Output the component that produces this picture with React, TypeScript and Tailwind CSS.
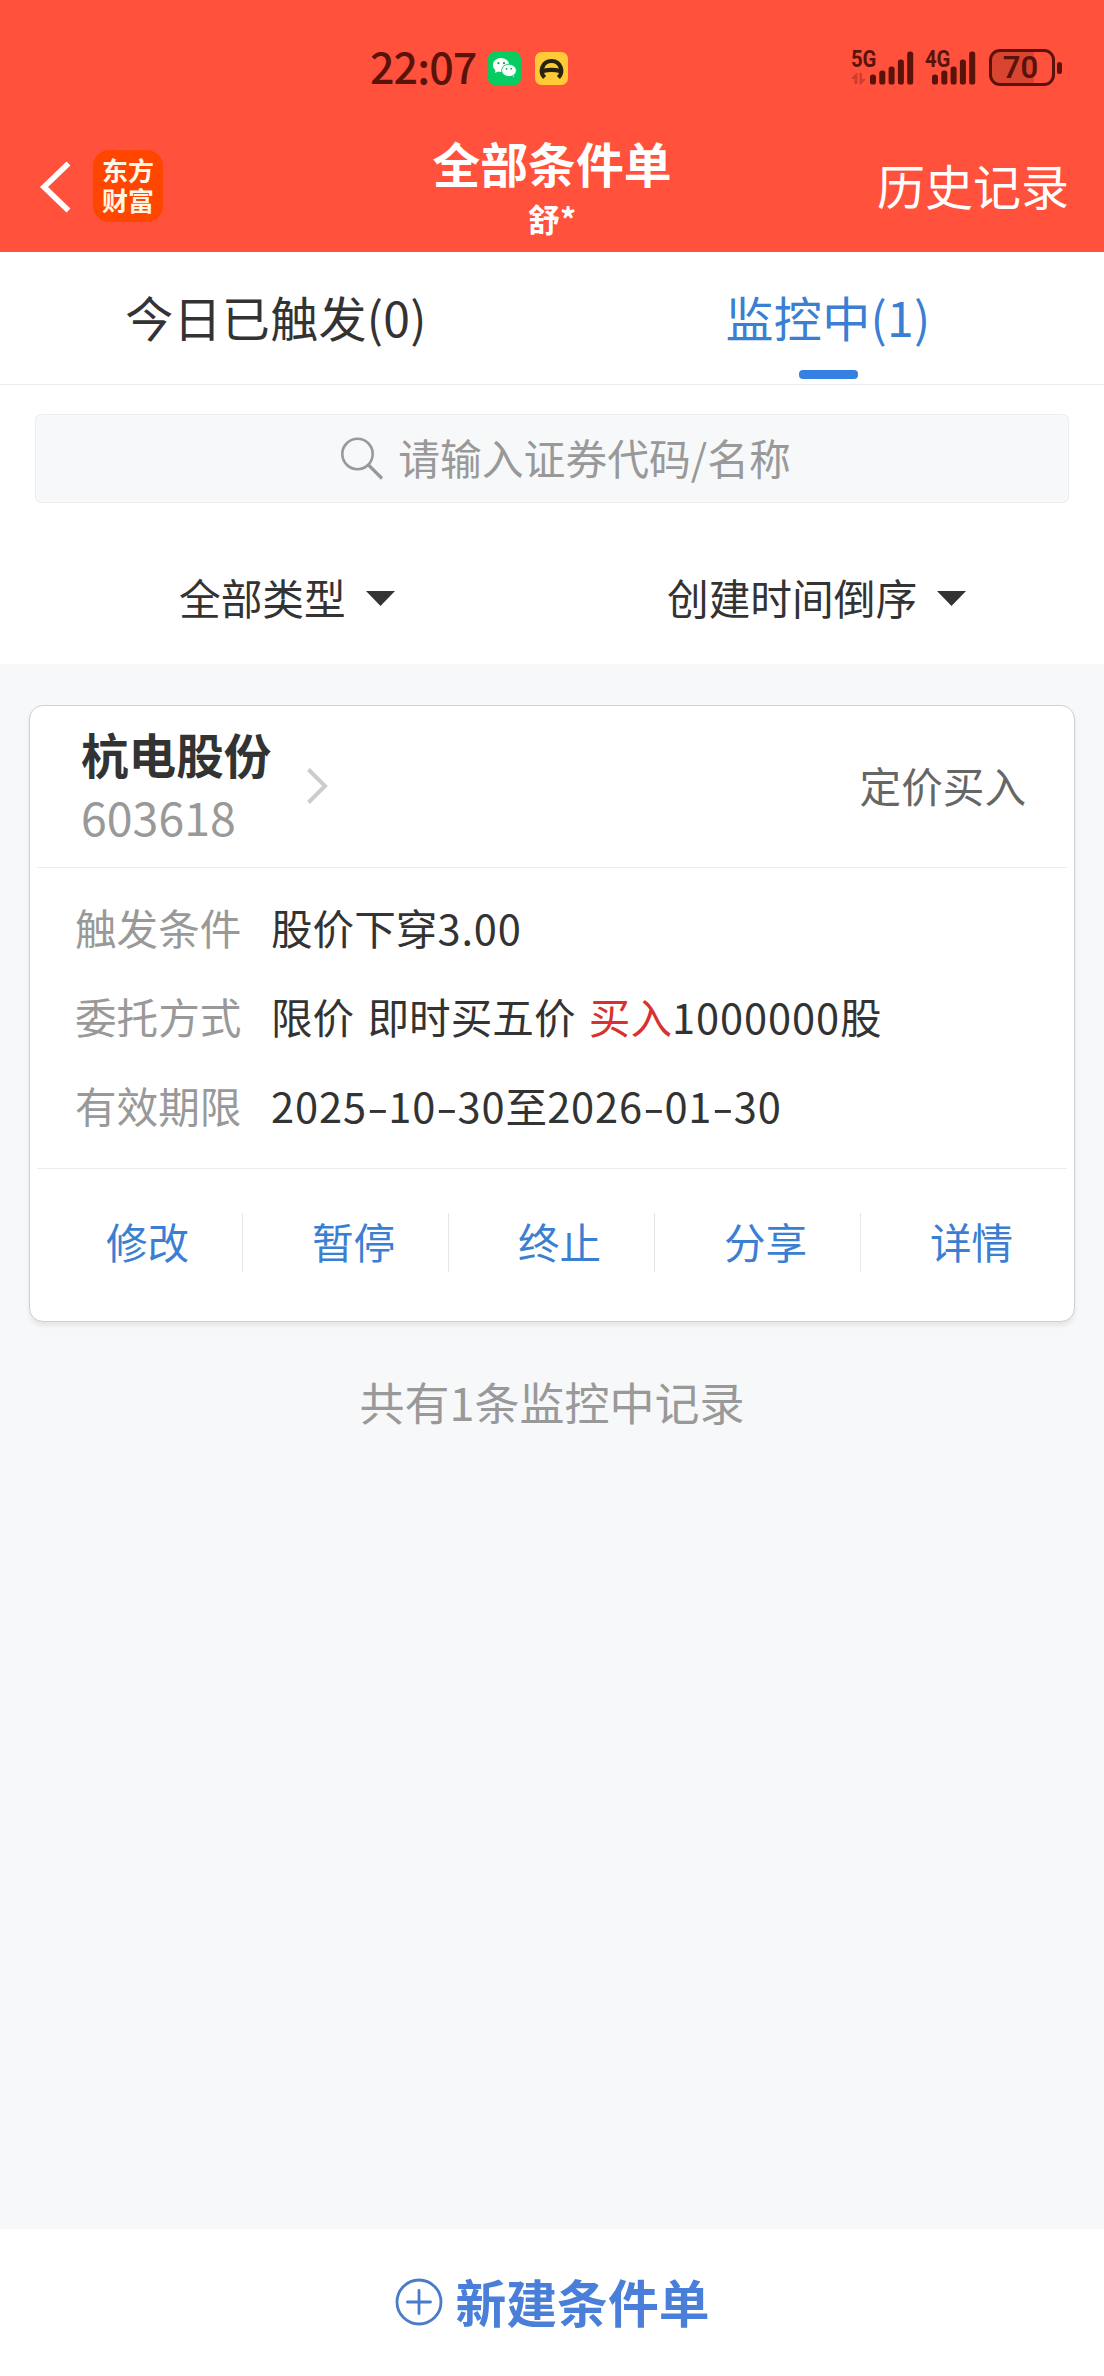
import React from "react";

const SIGNAL_HEIGHTS = [10, 14, 18, 25, 33];

function SignalBars() {
  return (
    <svg width="44" height="34" viewBox="0 0 44 34" fill="#5a130a">
      {SIGNAL_HEIGHTS.map((h, i) => (
        <rect key={h} x={i * 9.3} y={33.5 - h} width="6" height={h} rx="2.6" />
      ))}
    </svg>
  );
}

function StatusBar() {
  return (
    <div className="flex h-[124px] items-start pt-[49px] text-[#5a130a]">
      <div className="ml-[370px] flex h-[33px] w-[118px] items-center whitespace-nowrap text-[43px] font-medium leading-[33px]">
        <span className="tracking-[-0.9px]">22:07</span>
      </div>
      <svg className="mt-[3px]" width="33" height="33" viewBox="0 0 33 33">
        <rect width="33" height="33" rx="6.5" fill="#07cc62" />
        <g fill="#fff">
          <path d="M7.5 16.5 L7.2 21 L12 18.5 Z M25.5 21 L26.2 24.8 L22 23.5 Z" />
          <ellipse cx="13" cy="13" rx="8.2" ry="6.9" />
          <ellipse cx="21" cy="18.4" rx="7.4" ry="6.2" stroke="#07cc62" strokeWidth="0.9" />
        </g>
        <g fill="#07a851">
          <circle cx="10.4" cy="11.2" r="1.1" />
          <circle cx="16" cy="11.2" r="1.1" />
          <circle cx="18.6" cy="16.8" r="0.9" />
          <circle cx="23.2" cy="16.8" r="0.9" />
        </g>
      </svg>
      <svg className="ml-[14px] mt-[3px]" width="33" height="33" viewBox="0 0 33 33">
        <rect width="33" height="33" rx="6.5" fill="#ffca38" />
        <path
          d="M9.6 25.6 C4 20 7 9 16.5 9 C26 9 29 20 23.4 25.6 M8 19 C13 17.6 20 17.6 25 19"
          fill="none"
          stroke="#26230f"
          strokeWidth="4.2"
        />
      </svg>
      <div className="ml-[283px] mt-[1px] flex h-[35px] items-end">
        <div className="flex h-[35px] w-[18.5px] flex-col whitespace-nowrap">
          <span className="w-[28px] origin-left scale-x-[0.88] font-['Roboto',sans-serif] text-[23px] font-bold leading-[20px]">5G</span>
          <svg className="mt-[3px]" width="15" height="12" viewBox="0 0 15 12" fill="#cf3f2e">
            <path d="M0 6 L5 0 H6.5 V11 H3.5 V6 Z M15 6 L10 11.5 H8.5 V0 H11 V6 Z" />
          </svg>
        </div>
        <SignalBars />
      </div>
      <div className="ml-[11px] mt-[1px] flex h-[35px] items-end">
        <div className="flex h-[35px] w-[7px] flex-col whitespace-nowrap">
          <span className="w-[28px] origin-left scale-x-[0.88] font-['Roboto',sans-serif] text-[23px] font-bold leading-[20px]">4G</span>
        </div>
        <SignalBars />
      </div>
      <div className="ml-[13px] flex items-center">
        <div className="flex h-[37px] w-[66px] items-center justify-center rounded-[11px] border-[3px] border-[#5a130a] bg-[linear-gradient(90deg,#d94531_70%,transparent_70%)] pr-[2px] font-['Roboto',sans-serif] text-[31px] font-semibold leading-[31px]">
          <span>70</span>
        </div>
        <div className="ml-[2px] h-[12px] w-[5px] rounded-[2.5px] bg-[#5a130a]" />
      </div>
    </div>
  );
}

function TitleBar() {
  return (
    <div className="grid h-[128px] grid-cols-[1fr_auto_1fr]">
      <div className="flex items-start">
        <svg className="ml-[38px] mt-[35px]" width="36" height="56" viewBox="0 0 36 56">
          <path d="M30.5 4.5 L6 28 L30.5 51.5" fill="none" stroke="#fff" strokeWidth="5.6" />
        </svg>
        <div className="ml-[19px] mt-[26px] flex h-[72px] w-[70px] flex-col items-center justify-center rounded-[16px] bg-[#ff4600] pb-[2px] text-[26px] font-bold leading-[30px] text-[#fff6e8]">
          <span>东方</span>
          <span>财富</span>
        </div>
      </div>
      <div className="flex flex-col items-center pt-[13px] font-bold text-white">
        <span className="text-[47.8px] leading-[52px]">全部条件单</span>
        <span className="mt-[9px] text-[32px] leading-[40px]">舒*</span>
      </div>
      <div className="flex justify-end pr-[35px] pt-[32px] text-[48px] leading-[56px] text-white">
        <span>历史记录</span>
      </div>
    </div>
  );
}

function Tabs() {
  return (
    <div className="grid h-[133px] grid-cols-2 border-b border-[#ebebeb] text-[48px]">
      <div className="flex flex-col items-center pt-[34px] leading-[60px] text-[#333]">
        <span className="tracking-[0.3px]">今日已触发(0)</span>
      </div>
      <div className="flex flex-col items-center pt-[34px] leading-[60px] text-[#3b7fd3]">
        <span className="tracking-[0.3px]">监控中(1)</span>
        <span className="mt-[24px] h-[9px] w-[59px] rounded-[4px] bg-[#3480e3]" />
      </div>
    </div>
  );
}

function Caret() {
  return (
    <svg className="mt-[2px]" width="29" height="15" viewBox="0 0 29 15">
      <path d="M0 0 H29 L14.5 15 Z" fill="#333" />
    </svg>
  );
}

function Hyphen() {
  return <span className="inline-block w-[21.3px] origin-left scale-x-[1.5]">-</span>;
}

function Num({ children }: { children: React.ReactNode }) {
  return <span className="tracking-[0.9px]">{children}</span>;
}

function Row({ label, children }: { label: string; children: React.ReactNode }) {
  return (
    <div className="flex h-[89px] items-center whitespace-nowrap">
      <span className="w-[196px] text-[#999]">{label}</span>
      <span className="text-[#333]">{children}</span>
    </div>
  );
}

function OrderCard() {
  const actions = ["修改", "暂停", "终止", "分享", "详情"];
  return (
    <div className="mx-[29px] mt-[41px] h-[617px] rounded-[14px] border border-[#cdcfd1] bg-white px-[7px] text-[41.6px] leading-[60px] shadow-[0_4px_4px_rgba(0,0,0,0.07)]">
      <div className="flex h-[162px] items-start border-b border-[#ececec] pl-[44px] pr-[41px]">
        <div className="flex flex-col pt-[18px]">
          <span className="text-[47.6px] font-bold leading-[60px]">杭电股份</span>
          <span className="mt-[2px] text-[46.5px] leading-[60px] text-[#999]">603618</span>
        </div>
        <svg className="ml-[34px] mt-[61px]" width="24" height="38" viewBox="0 0 24 38">
          <path d="M3.5 2.5 L20 19 L3.5 35.5" fill="none" stroke="#ccc" strokeWidth="4" />
        </svg>
        <span className="ml-auto mt-[49px] text-[#666]">定价买入</span>
      </div>
      <div className="h-[301px] border-b border-[#ececec] pl-[38px] pt-[14px]">
        <Row label="触发条件">
          股价下穿<Num>3.00</Num>
        </Row>
        <Row label="委托方式">
          <span className="[word-spacing:4px]">限价 即时买五价 </span>
          <span className="text-[#d93030]">买入</span>
          <Num>1000000</Num>股
        </Row>
        <Row label="有效期限">
          <Num>2025</Num><Hyphen /><Num>10</Num><Hyphen /><Num>30</Num>至<Num>2026</Num><Hyphen /><Num>01</Num><Hyphen /><Num>30</Num>
        </Row>
      </div>
      <div className="grid grid-cols-5 pt-[44px] text-[#3b7fd3]">
        {actions.map((a) => (
          <div key={a} className="flex h-[59px] items-center justify-center border-r border-[#e6e6e6] pb-[3px] pl-[16px] last:border-transparent">
            {a}
          </div>
        ))}
      </div>
    </div>
  );
}

export default function App() {
  return (
    <div className="flex h-[2376px] w-[1104px] flex-col overflow-hidden bg-[#f6f8fa] font-['Noto_Sans_CJK_SC',sans-serif] text-[#333]">
      <header className="bg-[#ff513b]">
        <StatusBar />
        <TitleBar />
      </header>
      <section className="h-[412px] bg-white">
        <Tabs />
        <div className="mx-[35px] mt-[29px] flex h-[89px] items-center justify-center rounded-[6px] border border-[#ebedef] bg-[#f6f8fa] text-[41.8px] leading-[60px] text-[#999]">
          <svg className="ml-[27px] mr-[14px] mt-[-1px]" width="44" height="44" viewBox="0 0 44 44" fill="none" stroke="#999" strokeWidth="2.6">
            <circle cx="17.5" cy="18" r="15.2" />
            <path d="M28.5 29 L42 42.5" strokeWidth="3.2" />
          </svg>
          <span className="mt-[-4px]">请输入证券代码/名称</span>
        </div>
        <div className="flex pt-[64px] text-[41.7px] leading-[60px]">
          <div className="flex w-[487px] items-center gap-[20px] pl-[179px]">
            <span>全部类型</span>
            <Caret />
          </div>
          <div className="flex items-center gap-[20px] pl-[180px]">
            <span>创建时间倒序</span>
            <Caret />
          </div>
        </div>
      </section>
      <main className="flex-1">
        <OrderCard />
        <p className="mt-[50px] text-center text-[45px] leading-[60px] text-[#999]">共有1条监控中记录</p>
      </main>
      <footer className="flex h-[147px] justify-center bg-white pt-[42px] text-[#4a7fd9]">
        <svg className="mt-[7px]" width="48" height="48" viewBox="0 0 48 48" fill="none" stroke="#4a7bc9" strokeWidth="2.8">
          <circle cx="24" cy="24" r="22" />
          <path d="M12.5 24 H35.5 M24 12.5 V35.5" strokeLinecap="round" />
        </svg>
        <span className="ml-[13px] text-[50.8px] font-bold leading-[60px]">新建条件单</span>
      </footer>
    </div>
  );
}
